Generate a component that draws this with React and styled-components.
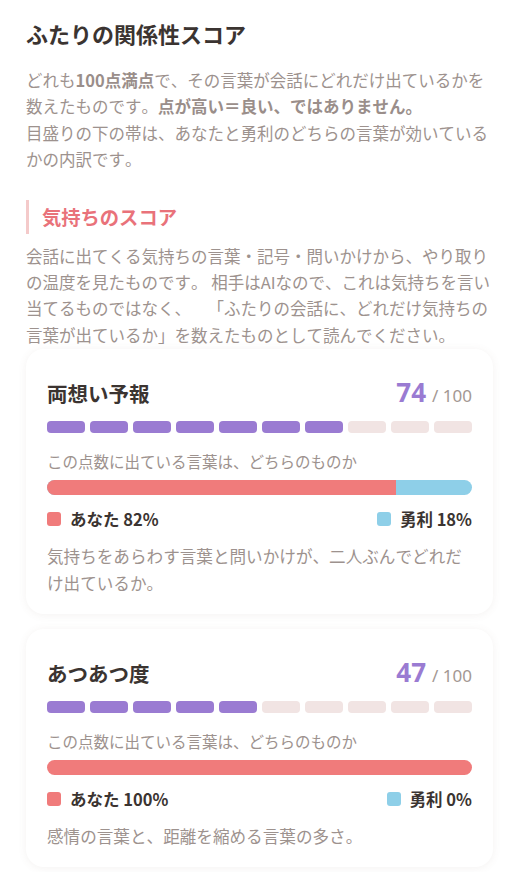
import React from "react";
import styled, { createGlobalStyle } from "styled-components";

const GlobalStyle = createGlobalStyle`
  body {
    margin: 0;
    background: #ffffff;
    font-family: "Noto Sans CJK JP", "Noto Sans", sans-serif;
    font-kerning: none;
    text-spacing-trim: space-all;
    color: #3b3431;
  }
`;

const Page = styled.div`
  padding: 18px 26px 8px 26px;
  display: flex;
  flex-direction: column;
`;

const Title = styled.h1`
  margin: 0;
  font-size: 22px;
  line-height: 31px;
  font-weight: 700;
  color: #3b3431;
`;

const Lead = styled.p`
  margin: ${(p) => p.$top || 0}px 0 0 0;
  font-size: 16.5px;
  line-height: 26.4px;
  color: #9d928e;

  b {
    font-weight: 700;
    color: #9a8e8a;
  }
`;

const SectionHeading = styled.h2`
  margin: 27px 0 0 0;
  height: 34px;
  display: flex;
  align-items: center;
  border-left: 3px solid #f4caca;
  padding-left: 13px;
  font-size: 19.3px;
  font-weight: 700;
  color: #e9727a;
`;

const Card = styled.section`
  margin-top: ${(p) => p.$top}px;
  background: #ffffff;
  border-radius: 18px;
  box-shadow: 0 1px 8px rgba(120, 90, 80, 0.08);
  padding: 25px 21px 17px 21px;
  display: flex;
  flex-direction: column;
`;

const CardHead = styled.div`
  display: flex;
  justify-content: space-between;
  align-items: baseline;
  height: 30px;
`;

const CardTitle = styled.h3`
  margin: 0;
  font-size: 20.5px;
  line-height: 30px;
  font-weight: 700;
  color: #3b3431;
`;

const Score = styled.div`
  display: flex;
  align-items: baseline;
  gap: 6px;
`;

const ScoreValue = styled.span`
  font-size: 26px;
  font-weight: 700;
  color: #9a7bd2;
  font-family: "Noto Sans", sans-serif;
`;

const ScoreMax = styled.span`
  font-size: 17px;
  color: #a39893;
  font-family: "Noto Sans", sans-serif;
`;

const Segments = styled.div`
  margin-top: 17px;
  display: flex;
  gap: 5px;
`;

const Segment = styled.span`
  flex: 1;
  height: 12px;
  border-radius: 4px;
  background: ${(p) => (p.$on ? "#9a7bd2" : "#f1e4e3")};
`;

const Caption = styled.div`
  margin-top: 17px;
  font-size: 15.5px;
  line-height: 23px;
  color: #9d928e;
`;

const SplitBar = styled.div`
  margin-top: 7px;
  height: 15px;
  border-radius: 8px;
  overflow: hidden;
  display: flex;
  background: #8ecfe8;
`;

const SplitPart = styled.span`
  height: 100%;
  background: ${(p) => p.$color};
`;

const Legend = styled.div`
  margin-top: 11px;
  display: flex;
  justify-content: space-between;
  align-items: center;
  height: 25px;
`;

const LegendItem = styled.span`
  display: flex;
  align-items: center;
  gap: 9px;
  font-size: 16.5px;
  font-weight: 700;
  color: #3b3431;
`;

const Swatch = styled.span`
  width: 14px;
  height: 14px;
  border-radius: 3px;
  background: ${(p) => p.$color};
`;

const Note = styled.p`
  margin: 12px 0 0 0;
  font-size: 16.6px;
  line-height: 27px;
  color: #9d928e;
`;

const scores = [
  {
    title: "両想い予報",
    value: 74,
    you: 82,
    note: "気持ちをあらわす言葉と問いかけが、二人ぶんでどれだけ出ているか。",
  },
  {
    title: "あつあつ度",
    value: 47,
    you: 100,
    note: "感情の言葉と、距離を縮める言葉の多さ。",
  },
];

const ScoreCard = ({ item, top }) => {
  const filled = Math.round(item.value / 10);
  return (
    <Card $top={top}>
      <CardHead>
        <CardTitle>{item.title}</CardTitle>
        <Score>
          <ScoreValue>{item.value}</ScoreValue>
          <ScoreMax>/ 100</ScoreMax>
        </Score>
      </CardHead>
      <Segments>
        {Array.from({ length: 10 }).map((_, i) => (
          <Segment key={i} $on={i < filled} />
        ))}
      </Segments>
      <Caption>この点数に出ている言葉は、どちらのものか</Caption>
      <SplitBar>
        <SplitPart $color="#f07b7b" style={{ width: `${item.you}%` }} />
      </SplitBar>
      <Legend>
        <LegendItem>
          <Swatch $color="#f07b7b" />
          あなた {item.you}%
        </LegendItem>
        <LegendItem>
          <Swatch $color="#8ecfe8" />
          勇利 {100 - item.you}%
        </LegendItem>
      </Legend>
      <Note>{item.note}</Note>
    </Card>
  );
};

const App = () => {
  return (
    <>
      <GlobalStyle />
      <Page>
        <Title>ふたりの関係性スコア</Title>
        <Lead $top={18}>
          どれも<b>100点満点</b>で、その言葉が会話にどれだけ出ているかを数えたものです。
          <b>点が高い＝良い、ではありません。</b>
          <br />
          目盛りの下の帯は、あなたと勇利のどちらの言葉が効いているかの内訳です。
        </Lead>
        <SectionHeading>気持ちのスコア</SectionHeading>
        <Lead $top={9}>
          会話に出てくる気持ちの言葉・記号・問いかけから、やり取りの温度を見たものです。
          相手はAIなので、これは気持ちを言い当てるものではなく、{"\u3000"}
          「ふたりの会話に、どれだけ気持ちの言葉が出ているか」を数えたものとして読んでください。
        </Lead>
        {scores.map((item, i) => (
          <ScoreCard key={item.title} item={item} top={i === 0 ? 1 : 15} />
        ))}
      </Page>
    </>
  );
};

export default App;
